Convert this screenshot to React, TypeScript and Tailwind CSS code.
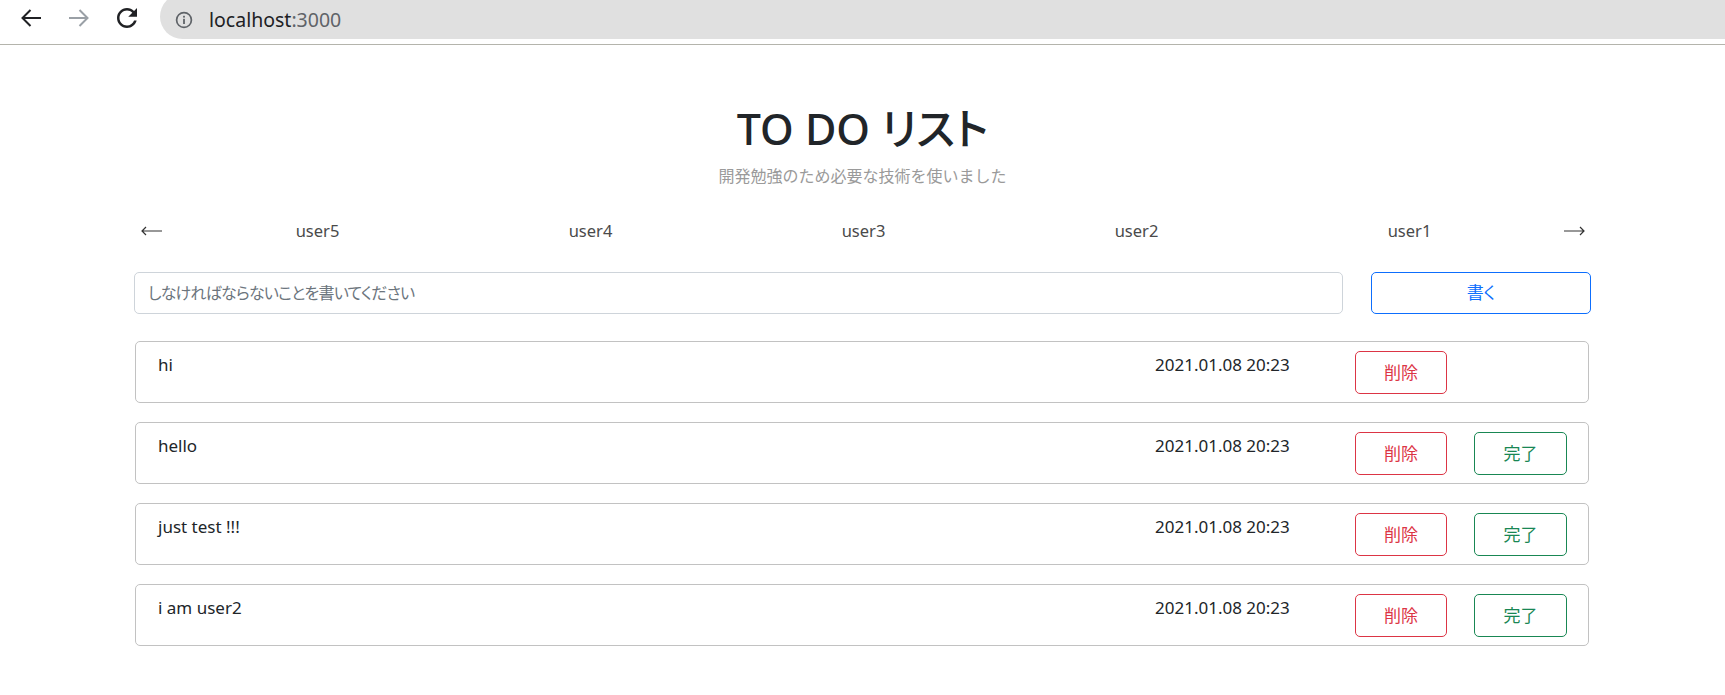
import React from 'react';

interface Todo {
  id: number;
  text: string;
  date: string;
  canComplete: boolean;
}

const users = ['user5', 'user4', 'user3', 'user2', 'user1'];

const todos: Todo[] = [
  { id: 1, text: 'hi', date: '2021.01.08 20:23', canComplete: false },
  { id: 2, text: 'hello', date: '2021.01.08 20:23', canComplete: true },
  { id: 3, text: 'just test !!!', date: '2021.01.08 20:23', canComplete: true },
  { id: 4, text: 'i am user2', date: '2021.01.08 20:23', canComplete: true },
];

const BrowserBar: React.FC = () => {
  return (
    <div className="flex h-[45px] items-start border-b border-[#b4b4ac] bg-white">
      <div className="flex h-[35px] items-center">
        {/* back */}
        <svg width="22" height="20" viewBox="0 0 22 20" className="ml-[20px]">
          <path d="M21 10H2.5M10.5 2L2.5 10L10.5 18" fill="none" stroke="#202124" strokeWidth="2" />
        </svg>
        {/* forward */}
        <svg width="22" height="20" viewBox="0 0 22 20" className="ml-[26px]">
          <path d="M1 10H19.5M11.5 2L19.5 10L11.5 18" fill="none" stroke="#9aa0a6" strokeWidth="2" />
        </svg>
        {/* reload */}
        <svg width="30" height="30" viewBox="0 0 24 24" className="ml-[22px]">
          <path
            d="M17.65 6.35C16.2 4.9 14.21 4 12 4c-4.42 0-7.990 3.58-7.99 8s3.57 8 7.99 8c3.73 0 6.84-2.55 7.73-6h-2.08c-.82 2.33-3.04 4-5.65 4-3.31 0-6-2.69-6-6s2.69-6 6-6c1.66 0 3.14.69 4.22 1.78L13 11h7V4l-2.35 2.35z"
            fill="#202124"
          />
        </svg>
      </div>
      <div className="ml-[18px] mt-[-6px] flex h-[45px] flex-1 items-center rounded-l-full bg-[#e0e0e0] pt-[6px]">
        <svg width="18" height="18" viewBox="0 0 18 18" className="ml-[15px]">
          <circle cx="9" cy="9" r="7.4" fill="none" stroke="#5f6368" strokeWidth="1.7" />
          <rect x="8.1" y="7.8" width="1.8" height="5.2" fill="#5f6368" />
          <rect x="8.1" y="4.8" width="1.8" height="1.8" fill="#5f6368" />
        </svg>
        <span className="ml-[16px] font-['Noto_Sans',sans-serif] text-[19.5px] text-[#202124]">
          localhost<span className="text-[#5f6368]">:3000</span>
        </span>
      </div>
    </div>
  );
};

const ArrowLeft: React.FC = () => (
  <svg width="21" height="10" viewBox="0 0 21 10">
    <path d="M21 5H1M5 1L1 5L5 9" fill="none" stroke="#333" strokeWidth="1.2" />
  </svg>
);

const ArrowRight: React.FC = () => (
  <svg width="21" height="10" viewBox="0 0 21 10">
    <path d="M0 5H20M16 1L20 5L16 9" fill="none" stroke="#333" strokeWidth="1.2" />
  </svg>
);

const TodoCard: React.FC<{ todo: Todo }> = ({ todo }) => {
  return (
    <div className="ml-[1px] mr-[2px] flex h-[62px] items-start rounded-[5px] border border-[#c2c2c2] bg-white">
      <div className="flex-1 pl-[22px] pt-[11px] text-[17px] leading-[24px] text-[#212529]">{todo.text}</div>
      <div className="w-[200px] pt-[11px] text-[17px] leading-[24px] text-[#212529]">{todo.date}</div>
      <button className="mt-[9px] h-[43px] w-[92px] rounded-[5px] border border-[#dc3545] text-[17px] text-[#dc3545]">
        削除
      </button>
      {todo.canComplete ? (
        <button className="ml-[27px] mr-[21px] mt-[9px] h-[43px] w-[93px] rounded-[5px] border border-[#198754] text-[17px] text-[#198754]">
          完了
        </button>
      ) : (
        <div className="ml-[27px] mr-[21px] w-[93px]" />
      )}
    </div>
  );
};

const App: React.FC = () => {
  return (
    <div className="min-h-screen bg-white font-['Noto_Sans','Noto_Sans_CJK_JP',sans-serif] text-[#212529]">
      <BrowserBar />
      <div className="mx-auto w-[1457px]">
        <h1 className="mt-[58px] text-center text-[43px] font-medium leading-[52px] text-[#212529] [font-feature-settings:'palt']">
          TO DO リスト
        </h1>
        <p className="mt-[9px] text-center text-[16px] leading-[24px] text-[#9a9a9a]">開発勉強のため必要な技術を使いました</p>

        <div className="mt-[25px] grid h-[36px] grid-cols-[47px_1fr_1fr_1fr_1fr_1fr_45px] items-center text-[16.5px] text-[#4a4a4a]">
          <div className="flex pl-[7px]">
            <ArrowLeft />
          </div>
          {users.map((u) => (
            <div key={u} className="text-center">
              {u}
            </div>
          ))}
          <div className="flex justify-end pr-[6px]">
            <ArrowRight />
          </div>
        </div>

        <div className="mt-[23px] flex gap-[28px]">
          <input
            className="h-[42px] flex-1 rounded-[5px] border border-[#ced4da] px-[13px] text-[16px] tracking-[-0.8px] outline-none placeholder:text-[#6c757d] [font-feature-settings:'palt']"
            placeholder="しなければならないことを書いてください"
          />
          <button className="h-[42px] w-[220px] rounded-[5px] border border-[#0d6efd] text-[17px] text-[#0d6efd] [font-feature-settings:'palt']">
            書く
          </button>
        </div>

        <div className="mt-[27px] flex flex-col gap-[19px]">
          {todos.map((t) => (
            <TodoCard key={t.id} todo={t} />
          ))}
        </div>
      </div>
    </div>
  );
};

export default App;
